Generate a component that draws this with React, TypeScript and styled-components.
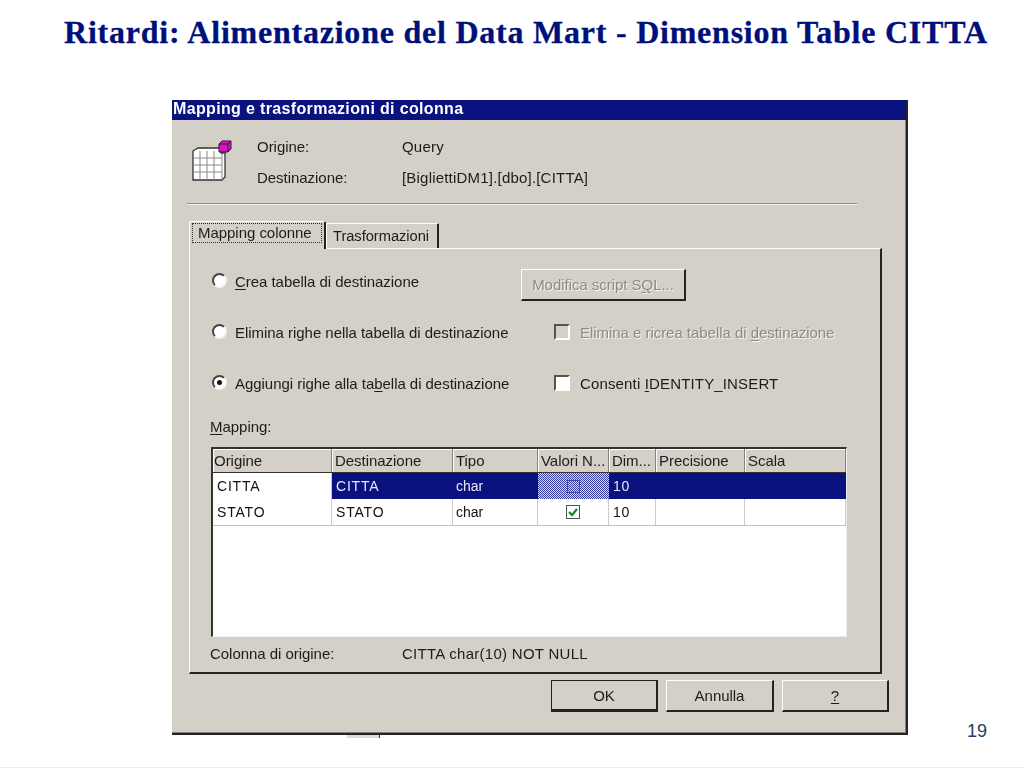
import React from "react";
import styled, { createGlobalStyle } from "styled-components";

const Global = createGlobalStyle`
  html, body { margin: 0; padding: 0; background: #fff; }
  body { font-family: "Liberation Sans", Arial, sans-serif; }
`;

const Slide = styled.div`
  width: 1024px; height: 768px; overflow: hidden; background: #fff;
  display: flex; flex-direction: column;
`;
const Heading = styled.h1`
  margin: 0; height: 100px; box-sizing: border-box; padding: 14px 0 0 64px;
  font: bold 32px/36px "Liberation Serif", serif; letter-spacing: 0.77px;
  -webkit-text-stroke: 0.3px #00107a;
  color: #00107a; white-space: nowrap;
`;
const Body = styled.div`
  display: flex; height: 667px; padding-left: 172px; position: relative;
`;
const Dialog = styled.div`
  width: 736px; height: 635px; box-sizing: border-box; background: #d4d0c8;
  border-right: 2px solid #222; border-bottom: 2px solid #222;
  box-shadow: inset -1px -1px 0 #808080;
  font-size: 15px; color: #1c1c1c; letter-spacing: -0.04px;
  filter: blur(0.35px);
`;
const Smudge = styled.div`
  position: absolute; left: 347px; top: 635px; width: 32px; height: 3px;
  background: #dcdcdc; border-right: 1px solid #333;
`;
const PageNumber = styled.div`
  margin-left: 59px; margin-top: 620px; font-size: 18px; line-height: 22px; color: #1f3d66;
`;
const FooterLine = styled.div`height: 1px; background: #ececec;`;
const TitleBar = styled.div`
  height: 20px; background: #0a1280; color: #fff; font: bold 16px/17px "Liberation Sans", sans-serif;
  padding-left: 1px; letter-spacing: 0.35px;
`;
const Info = styled.div`
  display: grid; grid-template-columns: 66px 145px 1fr; grid-auto-rows: 31px;
  margin-left: 19px; padding-top: 11px; height: 71px; align-items: center;
`;
const IconCell = styled.div`grid-row: span 2; align-self: start; margin-top: 9px;`;
const Value = styled.div`letter-spacing: 0.2px;`;
const Separator = styled.div`
  margin: 1px 0 0 15px; width: 670px; height: 1px; background: #8d8b85; border-bottom: 1px solid #f4f3f0;
`;
const Tabs = styled.div`
  display: flex; margin: 15px 0 0 17px; height: 28px; align-items: flex-end;
`;
const Tab = styled.div<{ $active?: boolean }>`
  box-sizing: border-box; height: ${p => (p.$active ? 28 : 25)}px; width: ${p => (p.$active ? 137 : 113)}px;
  background: #d4d0c8; border-top: 1px solid #fff; border-left: 1px solid #fff;
  border-right: 2px solid #222; border-radius: 2px 2px 0 0;
  padding: ${p => (p.$active ? "1px 0 0 2px" : "4px 0 0 6px")};
  font-size: ${p => (p.$active ? 15 : 14.7)}px; position: relative; z-index: ${p => (p.$active ? 1 : 0)};
  margin-bottom: ${p => (p.$active ? -1 : 0)}px;
`;
const Focus = styled.span`
  display: block; width: 130px; height: 20px; line-height: 17px; box-sizing: border-box;
  border: 1px dotted #333; padding-left: 5px;
`;
const Panel = styled.div`
  box-sizing: border-box; margin-left: 17px; width: 693px; height: 426px; padding: 10px 0 0 21px;
  border-top: 1px solid #fff; border-left: 1px solid #fff;
  border-right: 2px solid #222; border-bottom: 2px solid #222;
`;
const Options = styled.div`
  display: grid; grid-template-columns: 310px 1fr; grid-auto-rows: 51px; align-items: center;
`;
const Radio = styled.label`display: flex; align-items: center; gap: 8px; padding: 0 0 7px 1px;`;
const RadioDot = styled.span<{ $on?: boolean }>`
  width: 15px; height: 15px; border-radius: 50%; background: #fff; box-sizing: border-box; flex: none;
  border: 2px solid; border-color: #444 #f4f4f4 #f4f4f4 #444; display: flex; align-items: center; justify-content: center;
  margin-top: -1px;
  &::after { content: ""; width: 5px; height: 5px; border-radius: 50%; background: ${p => (p.$on ? "#111" : "transparent")}; }
`;
const Check = styled.label<{ $disabled?: boolean }>`
  display: flex; align-items: center; gap: 10px; padding: 0 0 7px 33px;
  color: ${p => (p.$disabled ? "#8c8a85" : "inherit")};
  text-shadow: ${p => (p.$disabled ? "1px 1px 0 #f6f5f2" : "none")};
  letter-spacing: ${p => (p.$disabled ? "-0.04px" : "0.15px")};
`;
const CheckBox = styled.span<{ $disabled?: boolean }>`
  width: 16px; height: 16px; box-sizing: border-box; flex: none;
  background: ${p => (p.$disabled ? "#d4d0c8" : "#fff")};
  border: 2px solid; border-color: #555 #fff #fff #555;
`;
const Button = styled.button<{ $default?: boolean; $disabled?: boolean; $w?: number }>`
  box-sizing: border-box; width: ${p => p.$w ?? 107}px; height: 32px; padding: 0; background: #d4d0c8;
  font: inherit; letter-spacing: inherit;
  color: ${p => (p.$disabled ? "#8c8a85" : "inherit")};
  text-shadow: ${p => (p.$disabled ? "1px 1px 0 #f6f5f2" : "none")};
  border: 1px solid; border-color: ${p => (p.$default ? "#222" : "#fff")};
  border-right: 2px solid #222; border-bottom: 2px solid #222;
  ${p => p.$default && "border-bottom-width: 3px;"}
`;
const U = styled.span`text-decoration: underline; text-underline-offset: 2px;`;
const MappingLabel = styled.div`margin: 6px 0 0 -1px; height: 20px; line-height: 18px;`;
const Table = styled.div`
  box-sizing: border-box; width: 636px; height: 190px; background: #fff;
  border-top: 2px solid #333; border-left: 2px solid #333; border-right: 1px solid #eee; border-bottom: 1px solid #eee;
  margin-top: 9px;
`;
const cols = "119px 121px 85px 71px 47px 89px 101px";
const HeaderRow = styled.div`
  display: grid; grid-template-columns: ${cols}; height: 24px; background: #d4d0c8;
  border-bottom: 1px solid #333; box-sizing: border-box;
`;
const HeaderCell = styled.div`
  padding-left: 3px; line-height: 23px; white-space: nowrap; overflow: hidden;
  border-right: 1px solid #85837e; box-shadow: inset 1px 1px 0 #fff;
  &:first-child { padding-left: 1px; }
`;
const Row = styled.div`
  display: grid; grid-template-columns: ${cols}; height: 26px; box-sizing: border-box;
  box-shadow: 0 1px 0 #c4c2bc; position: relative;
`;
const Cell = styled.div<{ $sel?: boolean; $center?: boolean }>`
  padding-left: 4px; line-height: 26px; font-size: 14px; letter-spacing: 0.8px; border-right: 1px solid #cfcdc7;
  background: ${p => (p.$sel ? "#0a1280" : "#fff")};
  color: ${p => (p.$sel ? "#e8e8f8" : "#111")};
  ${p => p.$sel && "border-right-color: #0a1280;"}
  ${p => p.$center && "padding: 0; display: flex; align-items: center; justify-content: center;"}
`;
const TypeText = styled.span`letter-spacing: 0; margin-left: -1px;`;
const Dither = styled.div`
  display: flex; align-items: center; justify-content: center;
  background: repeating-conic-gradient(#3840a8 0 25%, #d4d8f2 0 50%) 0 0 / 2px 2px;
`;
const GhostBox = styled.span`width: 13px; height: 13px; border: 1px solid #3f4aa0; box-sizing: border-box;`;
const TickBox = styled.span`
  width: 14px; height: 14px; box-sizing: border-box; border: 1px solid #55534f; background: #fff;
  display: flex; align-items: center; justify-content: center;
`;
const Status = styled.div`
  display: grid; grid-template-columns: 192px 1fr; margin: 8px 0 0 -1px; line-height: 18px;
`;
const StatusValue = styled.div`letter-spacing: 0.28px;`;
const Actions = styled.div`
  display: flex; margin: 6px 0 0 379px; gap: 8px;
`;

const TableIcon = () => (
  <svg width="42" height="42" viewBox="0 0 42 42">
    <path d="M2 11 L7 8 H30 V13 L34 13 V37 L31 40 H2 Z" fill="#fff" stroke="#333" strokeWidth="1.3" />
    <path d="M2 18 H31 M2 25 H31 M2 32 H31 M9 11 V40 M16 11 V40 M23 11 V40 M31 14 V40" stroke="#888" strokeWidth="1" fill="none" />
    <path d="M28 4 L31 1 H40 V9 L37 12 H28 Z" fill="#e010c8" stroke="#222" strokeWidth="1" />
    <path d="M28 4 H37 V12 M37 4 L40 1" stroke="#222" strokeWidth="1" fill="none" />
  </svg>
);

export default function App() {
  return (
    <Slide>
      <Global />
      <Heading>Ritardi: Alimentazione del Data Mart - Dimension Table CITTA</Heading>
      <Body>
        <Dialog>
          <TitleBar>Mapping e trasformazioni di colonna</TitleBar>
          <Info>
            <IconCell><TableIcon /></IconCell>
            <div>Origine:</div>
            <Value>Query</Value>
            <div>Destinazione:</div>
            <Value>[BigliettiDM1].[dbo].[CITTA]</Value>
          </Info>
          <Separator />
          <Tabs>
            <Tab $active><Focus>Mapping colonne</Focus></Tab>
            <Tab>Trasformazioni</Tab>
          </Tabs>
          <Panel>
            <Options>
              <Radio><RadioDot /><span><U>C</U>rea tabella di destinazione</span></Radio>
              <div><Button $disabled $w={165}>Modifica script S<U>Q</U>L...</Button></div>
              <Radio><RadioDot /><span>Elimina ri<U>g</U>he nella tabella di destinazione</span></Radio>
              <Check $disabled><CheckBox $disabled /><span>Elimina e ricrea tabella di <U>d</U>estinazione</span></Check>
              <Radio><RadioDot $on /><span>Aggiungi righe alla ta<U>b</U>ella di destinazione</span></Radio>
              <Check><CheckBox /><span>Consenti <U>I</U>DENTITY_INSERT</span></Check>
            </Options>
            <MappingLabel><U>M</U>apping:</MappingLabel>
            <Table>
              <HeaderRow>
                {["Origine", "Destinazione", "Tipo", "Valori N...", "Dim...", "Precisione", "Scala"].map(h => (
                  <HeaderCell key={h}>{h}</HeaderCell>
                ))}
              </HeaderRow>
              <Row>
                <Cell>CITTA</Cell>
                <Cell $sel>CITTA</Cell>
                <Cell $sel><TypeText>char</TypeText></Cell>
                <Dither><GhostBox /></Dither>
                <Cell $sel>10</Cell>
                <Cell $sel />
                <Cell $sel />
              </Row>
              <Row>
                <Cell>STATO</Cell>
                <Cell>STATO</Cell>
                <Cell><TypeText>char</TypeText></Cell>
                <Cell $center>
                  <TickBox>
                    <svg width="12" height="12" viewBox="0 0 12 12">
                      <path d="M2 6 L5 9 L10 3" fill="none" stroke="#0f8a1e" strokeWidth="2.2" />
                    </svg>
                  </TickBox>
                </Cell>
                <Cell>10</Cell>
                <Cell />
                <Cell />
              </Row>
            </Table>
            <Status>
              <div>Colonna di origine:</div>
              <StatusValue>CITTA char(10) NOT NULL</StatusValue>
            </Status>
          </Panel>
          <Actions>
            <Button $default>OK</Button>
            <Button $w={108}>Annulla</Button>
            <Button><U>?</U></Button>
          </Actions>
        </Dialog>
        <Smudge />
        <PageNumber>19</PageNumber>
      </Body>
      <FooterLine />
    </Slide>
  );
}
